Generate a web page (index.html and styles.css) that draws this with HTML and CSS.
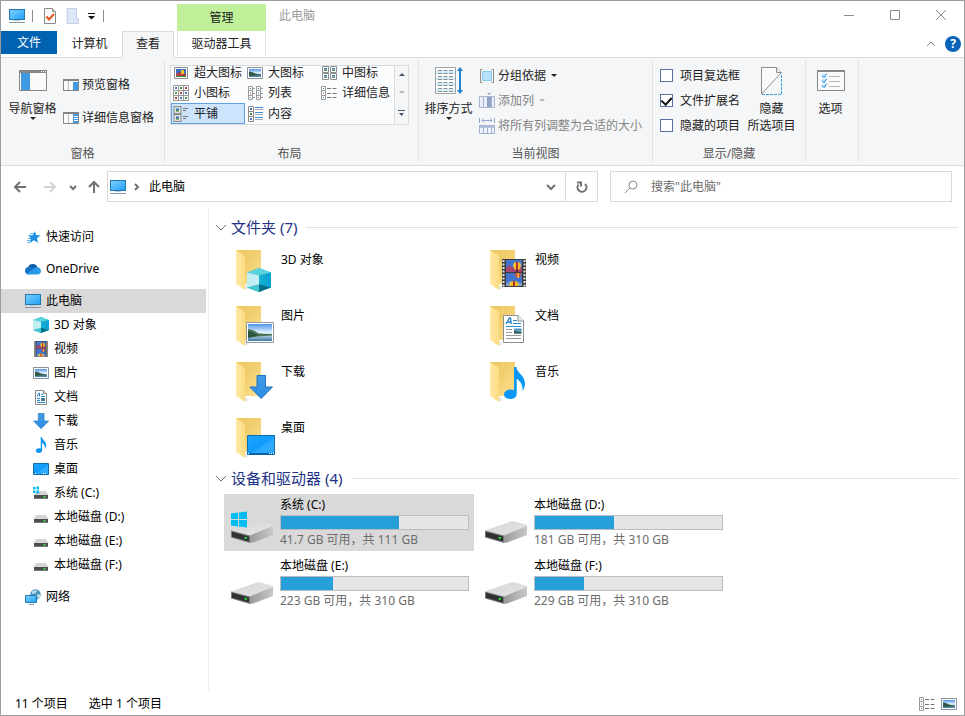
FILE: index.html
```html
<!DOCTYPE html>
<html lang="zh-CN">
<head>
    <meta charset="UTF-8">
    <meta name="viewport" content="width=device-width, initial-scale=1.0">
    <title>此电脑</title>
    <link rel="stylesheet" href="styles.css">
</head>
<body>
    <!-- Shared icons -->
    <svg class="sprite" width="0" height="0">
        <defs>
            <linearGradient id="gScreen" x1="0" y1="0" x2="1" y2="1"><stop offset="0" stop-color="#7fd0ff"/><stop offset=".5" stop-color="#4fb9fc"/><stop offset="1" stop-color="#1d9cf5"/></linearGradient>
            <linearGradient id="gDesk" x1="0" y1="0" x2="1" y2="1"><stop offset="0" stop-color="#1ea5ff"/><stop offset=".5" stop-color="#0f9bfb"/><stop offset=".6" stop-color="#2faaff"/><stop offset="1" stop-color="#2faaff"/></linearGradient>
            <linearGradient id="gFolder" x1="0" y1="0" x2="1" y2="0"><stop offset="0" stop-color="#ffe9a6"/><stop offset="1" stop-color="#fbdc80"/></linearGradient>
            <linearGradient id="gFolderBack" x1="0" y1="0" x2="1" y2="1"><stop offset="0" stop-color="#eec965"/><stop offset=".4" stop-color="#f0cd6c"/><stop offset="1" stop-color="#ffe394"/></linearGradient>
            <linearGradient id="gCubeL" x1="0" y1="0" x2="1" y2="0"><stop offset="0" stop-color="#bdeef0"/><stop offset="1" stop-color="#c9eef5"/></linearGradient>
            <linearGradient id="gCubeR" x1="0" y1="0" x2="1" y2="0"><stop offset="0" stop-color="#14b3cf"/><stop offset="1" stop-color="#0d9fdb"/></linearGradient>
            <linearGradient id="gSky" x1="0" y1="0" x2="0" y2="1"><stop offset="0" stop-color="#4e92ea"/><stop offset=".5" stop-color="#e3f2fd"/><stop offset=".7" stop-color="#a9cbdd"/><stop offset="1" stop-color="#3b76a6"/></linearGradient>
            <linearGradient id="gDriveTop" x1="0" y1="0" x2="1" y2="1"><stop offset="0" stop-color="#d4d5d7"/><stop offset="1" stop-color="#e6e6e8"/></linearGradient>
            <linearGradient id="gDriveSide" x1="0" y1="0" x2="1" y2="0"><stop offset="0" stop-color="#98999b"/><stop offset="1" stop-color="#c7c8ca"/></linearGradient>
            <linearGradient id="gDown" x1="0" y1="0" x2="0" y2="1"><stop offset="0" stop-color="#3f9ce9"/><stop offset="1" stop-color="#2d8be2"/></linearGradient>
        </defs>
        <symbol id="pc" viewBox="0 0 16 16">
            <rect x=".5" y="1.5" width="15" height="10" fill="url(#gScreen)" stroke="#2677ac" stroke-width="1"/>
            <path d="M5 12h6v1H5z" fill="#b9c9d3" stroke="none"/><path d="M0 14h16v1H0z" fill="#8798ab" stroke="none"/>
        </symbol>
        <symbol id="cube" viewBox="0 0 16 16">
            <path d="M0 3 8 0l8 3v10l-8 3-8-3z" fill="#36bfd0"/><path d="M0 3 8 0l8 3-8 2z" fill="#58d2dc"/>
            <path d="M0 3l8 2v7.500L0 13z" fill="url(#gCubeL)"/><path d="M16 3 8 5v7.500l8 .5z" fill="url(#gCubeR)"/>
            <path d="M0 13l8-2.200V16z" fill="#43c6d2"/><path d="M16 13l-8-2.200V16z" fill="#04708c"/>
        </symbol>
        <symbol id="film" viewBox="0 0 24 28">
            <path d="M0 0h24v28H0z" fill="#3a3a3a"/>
            <path d="M1.500 1v27M22.500 1v27" stroke="#e4e4e4" stroke-width="2" stroke-dasharray="2 1.500"/>
            <path d="M4 1h16v12H4zM4 14h16v13H4z" fill="#3f74cf"/>
            <path d="M4 9l3-3 3 2 4 2 6-2v5H4z" fill="#a8456e"/><path d="M4 24l5-2 11 2v3H4z" fill="#7d9bd4"/>
            <path d="M15 3c6 0 4 6 1.500 8h-3C11 9 9 3 15 3z" fill="#f3c02a"/><path d="M14 3h2v8h-2z" fill="#b82f2c"/><path d="M14 11h2v1.500h-2z" fill="#222"/>
            <path d="M13 14h6c.500 3-2 5-3 5s-3.500-2-3-5z" fill="#dd4a3a"/><path d="M15.500 14h1.500v5h-1.500z" fill="#f3c02a"/>
            <path d="M12 22c4 0 5 2.500 4.500 5h-9C7 24.500 8 22 12 22z" fill="#f2bd2b"/><path d="M11 22h2v5h-2z" fill="#b82f2c"/>
        </symbol>
        <symbol id="photo" viewBox="0 0 28 21">
            <path d="M.5.500h27v20H.5z" fill="#fff" stroke="#8f9aa6"/>
            <path d="M2 2h24v17H2z" fill="url(#gSky)"/>
            <path d="M2 7c4 .5 7 2 10 4.200 4 .5 9 1 14 .8v1.500L2 15z" fill="#4d7254"/><path d="M2 9c4 .5 6 3 11 4.500L2 16z" fill="#2f573f"/>
        </symbol>
        <symbol id="photo-s" viewBox="0 0 16 16">
            <path d="M.5 2.500h15v11H.5z" fill="#fff" stroke="#8a949e"/>
            <path d="M2 4h12v8H2z" fill="url(#gSky)"/><path d="M2 6.500c3 0 5 2 8 2.500l4 .5v1L2 11z" fill="#33594a"/>
        </symbol>
        <symbol id="doc" viewBox="0 0 21 28">
            <path d="M.5.500h14.500l5.500 5.500v21.500H.5z" fill="#fff" stroke="#8b8f93"/><path d="M15 .5V6h5.500" fill="#eee" stroke="#8b8f93"/>
            <path d="M3 9 6.500 3h1l.8 6M4.500 7H8" fill="none" stroke="#2a80c4" stroke-width="1.300"/>
            <path d="M10 5.500h4M10 8.500h8M3 11.500h15" stroke="#2a8ad0"/><path d="M3 14.500h6M3 17.500h6M3 20.500h15M3 23.500h15" stroke="#9a9a9a"/>
            <path d="M11 13.500h7.500v5H11z" fill="#5794b8"/><path d="M11 16l7.500 1.500v1H11z" fill="#2e5848"/>
        </symbol>
        <symbol id="doc-s" viewBox="0 0 16 16">
            <path d="M2.500 1.500h8l3 3v11h-11z" fill="#fff" stroke="#85898d"/><path d="M10.500 1.500v3h3" fill="#eee" stroke="#85898d"/>
            <path d="M4 7.500 6 4h.5v3.500" fill="none" stroke="#2a80c4"/><path d="M8 5.500h2M8 7.500h4" stroke="#2a8ad0"/>
            <path d="M4 9.500h3M4 11.500h3M4 13.500h8" stroke="#2a8ad0"/><path d="M8 9h4v3H8z" fill="#47788d"/>
        </symbol>
        <symbol id="down" viewBox="0 0 24 24">
            <path d="M8 .500h8.500V12H23.500L12.200 23.500.800 12H8z" fill="url(#gDown)" stroke="#2375bd"/>
        </symbol>
        <symbol id="note" viewBox="0 0 21 32">
            <path d="M10 0h2.300c.6 6 8.700 8.200 8.700 17 0 2.500-1 4.800-2.600 7 .5-6.200-1.600-9.500-5.700-12.300V27c0 3-3 5-6.700 5-3.500 0-6-1.700-6-4.400 0-3 3-5.200 6.700-5.200 1.300 0 2.400.2 3.300.6z" fill="#0b98f5"/>
        </symbol>
        <symbol id="desk" viewBox="0 0 28 20">
            <path d="M.5.500h27v19H.5z" fill="url(#gDesk)" stroke="#0e6cb0"/><path d="M1 18h26v1.500H1z" fill="#0b62a3"/>
            <path d="M1 18h1v1H1zM22 18h1v1h-1zM24 18h1v1h-1zM26 18h1v1h-1z" fill="#fff"/>
        </symbol>
        <symbol id="desk-s" viewBox="0 0 16 16">
            <path d="M.5 2.500h15v11H.5z" fill="url(#gDesk)" stroke="#0e6cb0"/><path d="M2 12h1v1H2zM10 12h1v1h-1zM12 12h1v1h-1z" fill="#fff"/>
        </symbol>
        <symbol id="winlogo" viewBox="0 0 16 16">
            <path d="M0 2l7-1v6.500H0zM8 .900 16 0v7.500H8zM0 8.500h7V15l-7-1zM8 8.500h8V16l-8-1z" fill="#00bcf2"/>
        </symbol>
        <symbol id="drive-s" viewBox="0 0 16 16">
            <path d="M3 6h10l2 4H1z" fill="#d3d5d8"/><path d="M1 10h14v4H1z" fill="#4b4d4f"/><path d="M1 13h14v1H1z" fill="#77797b"/><path d="M10.500 11h2v1.500h-2z" fill="#39f03a"/>
        </symbol>
        <symbol id="sysdrive-s" viewBox="0 0 16 16">
            <path d="M4 6h9l2 4H1z" fill="#d3d5d8"/><path d="M1 10h14v4H1z" fill="#4b4d4f"/><path d="M1 13h14v1H1z" fill="#77797b"/><path d="M10.500 11h2v1.500h-2z" fill="#39f03a"/>
            <path d="M0 2h2.500v2.500H0zM3.500 1.500H6v3H3.500zM0 5.500h2.500V8H0zM3.500 5.500H6v3H3.500z" fill="#00bcf2"/>
        </symbol>
        <symbol id="drive" viewBox="0 0 42 22">
            <path d="M0 9.500 26 .5h4L42 4v2L19 15z" fill="url(#gDriveTop)"/>
            <path d="M19 14.500 42 5v9L22 21.500l-3 .5z" fill="url(#gDriveSide)"/>
            <path d="M0 9.500l19 5V22L0 16.500z" fill="#77797b"/><path d="M1 10.800l17 4.700v5L1 15.800z" fill="#2e3032"/>
            <path d="M13.500 16h2.500v1.800h-2.500z" fill="#2be02e"/>
        </symbol>
        <symbol id="folder" viewBox="0 0 48 48">
            <path d="M5 4h25v34H12z" fill="url(#gFolderBack)"/><path d="M5 4l9 6v34l-9-6z" fill="url(#gFolder)"/>
            <path d="M14 38v5.500l4-1.500z" fill="#e9e9e9"/>
        </symbol>
        <symbol id="star" viewBox="0 0 16 16">
            <path d="M10 2l1 4 4.500.5-3.500 2.700L13 14 9 11.200l-4.600 3L6 9.500 3.500 6.500 8 6z" fill="#1e8fe0"/>
            <path d="M5 4.500h4M3 6.500h4M3 9.500h3M2 11.500h3M2.500 13.500h2" stroke="#58b0ee" fill="none"/>
        </symbol>
        <symbol id="cloud" viewBox="0 0 16 16">
            <path d="M3 6.500a5 5 0 0 1 9.500 0L8 10z" fill="#0c5cab"/>
            <path d="M3.500 6C1.500 6 0 7.600 0 9.700c0 2.100 1.600 3.800 3.600 3.800l7-4.500C9 7 6 5.700 3.500 6z" fill="#1370c4"/>
            <path d="M12.300 6.300c-2 0-4 1-5.300 2.700L1.500 12.800c.6.500 1.300.7 2.100.7h9C14.500 13.500 16 12 16 10s-1.500-3.700-3.700-3.700z" fill="#2a9be8"/>
        </symbol>
        <symbol id="network" viewBox="0 0 16 16">
            <circle cx="10.500" cy="5.500" r="5.200" fill="#4c93ba"/><path d="M7 2.500c2-2 4-1.500 5.500-.5L10 4.500 7 5zM11 6l4.500-1c.3 2-.5 4-2 5z" fill="#b6dcea"/>
            <path d="M.5 6.500h11v7H.5z" fill="url(#gScreen)" stroke="#2677ac"/><path d="M4 15.500h5" stroke="#8798ab"/>
        </symbol>
        <symbol id="thumb" viewBox="0 0 7 7">
            <path d="M.5.500h6v6h-6z" fill="#fff" stroke="#8c8c8c"/><path d="M2 2h3v1.500H2z" fill="#4580c0"/><path d="M2 3.500h3V5H2z" fill="#5b9058"/>
        </symbol>
        <symbol id="details" viewBox="0 0 16 16">
            <path d="M.5 1.500h4v13h-4zM.5 5.500h4M.5 10.500h4" fill="#fff" stroke="#999"/>
            <path d="M2 3h1v1H2zM2 12h1v1H2z" fill="#3d79bd"/><path d="M2 7.500h1v1H2z" fill="#c04040"/>
            <path d="M6 3.500h4M11.500 3.500h4M6 8.500h4M11.500 8.500h4M6 12.500h4M11.500 12.500h4" stroke="#777"/>
        </symbol>
    </svg>

    <div class="window">
        <!-- Title bar -->
        <header class="titlebar">
            <div class="quick">
                <svg class="i16"><use href="#pc"/></svg>
                <span class="bar"></span>
                <button aria-label="属性"><svg class="i16" viewBox="0 0 16 16"><path d="M2.500.500h8l3 3v12h-11z" fill="#fafafa" stroke="#8a8a8a"/><path d="M10.500.500v3h3" fill="#ddd" stroke="#8a8a8a"/><path d="M4.500 8.500l2.500 3 5-5.500" fill="none" stroke="#e0531d" stroke-width="2"/></svg></button>
                <button aria-label="新建文件夹"><svg class="i16" viewBox="0 0 16 16"><path d="M2 .5h9.500v10h2v5H2z" fill="#dbe7f7" stroke="#c3d0e6"/></svg></button>
                <button aria-label="自定义快速访问工具栏"><svg class="i8" viewBox="0 0 8 8"><path d="M0 1h7v1H0zM0 4h7L3.500 7.500z" fill="#111"/></svg></button>
                <span class="bar"></span>
            </div>
            <div class="context">管理</div>
            <h1>此电脑</h1>
            <div class="controls">
                <button aria-label="最小化"><svg viewBox="0 0 12 12"><path d="M1 5.500h10"/></svg></button>
                <button aria-label="最大化"><svg viewBox="0 0 12 12"><path d="M1.500.500h9v9h-9z"/></svg></button>
                <button aria-label="关闭"><svg viewBox="0 0 12 12"><path d="M1 0l10 10M11 0 1 10"/></svg></button>
            </div>
        </header>

        <!-- Ribbon tabs -->
        <div class="tabs">
            <button class="tab file">文件</button>
            <button class="tab">计算机</button>
            <button class="tab active">查看</button>
            <button class="tab tools">驱动器工具</button>
            <div class="tabs-end">
                <button aria-label="折叠功能区"><svg class="i8" viewBox="0 0 8 8"><path d="M0 6l4-4 4 4" fill="none" stroke="#8a8a8a"/></svg></button>
                <button class="help" aria-label="帮助">?</button>
            </div>
        </div>

        <!-- Ribbon -->
        <div class="ribbon">
            <section class="group g-panes">
                <div class="row">
                    <button class="big">
                        <svg viewBox="0 0 28 28"><path d="M.5 3.500h27v20H.5z" fill="#fafafa" stroke="#858585"/><path d="M0 3h28v3H0z" fill="#858585"/><path d="M22 4.500h1M24 4.500h1M26 4.500h1" stroke="#fff"/><path d="M2 6h9v17H2z" fill="#3f99e3"/><path d="M11 6h1v17h-1z" fill="#fff"/></svg>
                        <span>导航窗格</span><i class="caret"></i>
                    </button>
                    <div class="panes">
                        <button class="small"><svg class="i16" viewBox="0 0 16 16"><path d="M.5 2.500h15v11H.5z" fill="#fafafa" stroke="#858585"/><path d="M0 2h16v2H0z" fill="#858585"/><path d="M5.500 4v9" stroke="#bbb"/><path d="M10 5h5v8h-5z" fill="#3f99e3"/></svg>预览窗格</button>
                        <button class="small"><svg class="i16" viewBox="0 0 16 16"><path d="M.5 2.500h15v11H.5z" fill="#fafafa" stroke="#858585"/><path d="M0 2h16v2H0z" fill="#858585"/><path d="M5.500 4v9" stroke="#bbb"/><path d="M10 4h5v9h-5z" fill="#3f99e3"/><path d="M11 6.500h4M11 8.500h4M11 10.500h4" stroke="#fff"/></svg>详细信息窗格</button>
                    </div>
                </div>
                <h2>窗格</h2>
            </section>

            <section class="group g-layout">
                <div class="gallery">
                    <div class="choices">
                        <button class="small"><svg class="i16" viewBox="0 0 16 16"><path d="M1.500 2.500h13v11h-13z" fill="#fff" stroke="#8c8c8c"/><path d="M3 4h10v8H3z" fill="#3b6fc4"/><path d="M3 9l4-2 6 2v3H3z" fill="#b8403c"/><path d="M8 5h3v4H8z" fill="#ecc32e"/><path d="M3 11h10v1H3z" fill="#3b8a45"/></svg>超大图标</button>
                        <button class="small"><svg class="i16"><use href="#photo-s"/></svg>大图标</button>
                        <button class="small"><svg class="i16"><use href="#thumb" x="1" y="1" width="7" height="7"/><use href="#thumb" x="9" y="1" width="7" height="7"/><use href="#thumb" x="1" y="8" width="7" height="7"/><use href="#thumb" x="9" y="8" width="7" height="7"/></svg>中图标</button>
                        <button class="small"><svg class="i16" viewBox="0 0 16 16"><path d="M.5.500h15v15H.5zM5.500.500v15M10.500.500v15M.5 5.500h15M.5 10.500h15" fill="#fff" stroke="#999"/><path d="M2 3h2M12 8h2M7 13h2" stroke="#3d79bd" stroke-width="2"/><path d="M7 3h2M2 8h2M12 13h2" stroke="#4f9150" stroke-width="2"/><path d="M12 3h2M7 8h2M2 13h2" stroke="#c04040" stroke-width="2"/></svg>小图标</button>
                        <button class="small"><svg class="i16" viewBox="0 0 16 16"><path d="M1.500 1.500h4v13h-4zM1.500 5.500h4M1.500 10.500h4M9.500 1.500h4v13h-4zM9.500 5.500h4M9.500 10.500h4" fill="#fff" stroke="#999"/><path d="M3 3.500h1M11 3.500h1M3 12.500h1M11 8h1" stroke="#3d79bd"/><path d="M3 8h1M11 12.500h1" stroke="#c04040"/><path d="M6 3.500h2M6 8.500h2M6 12.500h2M14 3.500h2M14 8.500h2M14 12.500h2" stroke="#999"/></svg>列表</button>
                        <button class="small"><svg class="i16"><use href="#details"/></svg>详细信息</button>
                        <button class="small selected"><svg class="i16" viewBox="0 0 16 16"><use href="#thumb" width="9" height="8"/><use href="#thumb" y="8" width="9" height="8"/><path d="M10 2.500h5M10 4.500h3M10 10.500h5M10 12.500h3" stroke="#777"/></svg>平铺</button>
                        <button class="small"><svg class="i16" viewBox="0 0 16 16"><path d="M1.500.500h5v15h-5zM1.500 5.500h5M1.500 10.500h5" fill="#fff" stroke="#8c8c8c"/><path d="M3 3h2M3 13h2" stroke="#3d79bd" stroke-width="2"/><path d="M3 8h2" stroke="#4f9150" stroke-width="2"/><path d="M8 1.500h8M8 6.500h8M8 11.500h8" stroke="#3b8dd4"/><path d="M8 3.500h8M8 8.500h8M8 13.500h8" stroke="#aaa"/></svg>内容</button>
                    </div>
                    <div class="scroll">
                        <button aria-label="向上"><i class="caret up"></i></button>
                        <button aria-label="向下"><i class="caret off"></i></button>
                        <button aria-label="更多"><svg class="i8" viewBox="0 0 8 8"><path d="M0 1h7v1H0zM1 4h5L3.500 7z" fill="#44546a"/></svg></button>
                    </div>
                </div>
                <h2>布局</h2>
            </section>

            <section class="group g-view">
                <div class="row">
                    <button class="big">
                        <svg viewBox="0 0 28 28"><path d="M.5.500h20v26H.5z" fill="#fff" stroke="#a0a0a0"/><path d="M1 4h19v3H1zM1 10h19v3H1zM1 16h19v3H1zM1 22h19v3H1z" fill="#d3ecfa"/><path d="M3 3.500h15M3 6.500h15M3 9.500h15M3 12.500h15M3 15.500h15M3 18.500h15M3 21.500h15M3 24.500h15" stroke="#8d8d8d" stroke-dasharray="4 1.500"/><path d="M25 3v21" stroke="#2483cc" stroke-width="2"/><path d="M22 4l3-4 3 4zM22 23l3 4 3-4z" fill="#2483cc"/></svg>
                        <span>排序方式</span><i class="caret"></i>
                    </button>
                    <div class="list">
                        <button class="small"><svg class="i16" viewBox="0 0 16 16"><path d="M3.500 1.500h-2v13h2M12.500 1.500h2v13h-2" fill="none" stroke="#8c8c8c"/><path d="M3.500 3.500h9v9h-9z" fill="#b7e2ff" stroke="#8ac8ee"/></svg>分组依据<i class="caret"></i></button>
                        <button class="small" disabled><svg class="i16" viewBox="0 0 16 16"><path d="M.5 3.500h15v11H.5zM4.500 3v11M12.500 3v11" fill="#e9eef8" stroke="#a6b4d0"/><path d="M8 4h4v10H8z" fill="#8fa2c8"/><path d="M8 0h4l-2 2z" fill="#8fa2c8"/></svg>添加列<i class="caret"></i></button>
                        <button class="small" disabled><svg class="i16" viewBox="0 0 16 16"><path d="M.5 0v5M15.500 0v5M3 2.500h10M5 .5l-2 2 2 2M11 .5l2 2-2 2" fill="none" stroke="#92a5ca"/><path d="M.5 7.500h15v8H.5zM4.500 10v5M8.500 10v5M12.500 10v5" fill="#eef2fa" stroke="#a0b0d0"/><path d="M1 8h14v2H1z" fill="#b4c1dd"/></svg>将所有列调整为合适的大小</button>
                    </div>
                </div>
                <h2>当前视图</h2>
            </section>

            <section class="group g-show">
                <div class="row">
                    <div class="list">
                        <label><input type="checkbox">项目复选框</label>
                        <label><input type="checkbox" checked>文件扩展名</label>
                        <label><input type="checkbox">隐藏的项目</label>
                    </div>
                    <button class="big">
                        <svg viewBox="0 0 28 28"><path d="M3.500.500h15l5 5L3.500 27z" fill="#fafafa" stroke="#8c8c8c"/><path d="M18.500.500v5h5" fill="#eee" stroke="#8c8c8c"/><path d="M23.500 8v19.500H4" fill="none" stroke="#3b9be0" stroke-dasharray="3 1"/></svg>
                        <span>隐藏<br>所选项目</span>
                    </button>
                </div>
                <h2>显示/隐藏</h2>
            </section>

            <section class="group g-options">
                <button class="big">
                    <svg viewBox="0 0 28 28"><path d="M.5 3.500h27v20H.5z" fill="#fafafa" stroke="#858585"/><path d="M0 3h28v2H0z" fill="#858585"/><path d="M5 7h4v4H5zM5 12h4v4H5zM5 17h4v4H5z" fill="#c9e5fa"/><path d="M5 8.500l2 2L10 6.500M5 13.500l2 2 3-4M5 18.500l2 2 3-4" fill="none" stroke="#2a8ad8"/><path d="M12 9.500h11M12 14.500h11M12 19.500h11" stroke="#b5b5b5"/></svg>
                    <span>选项</span>
                </button>
            </section>
        </div>

        <!-- Address and search -->
        <div class="navbar">
            <button class="back" aria-label="后退"><svg class="i14" viewBox="0 0 14 14"><path d="M13 7H2M7 2 2 7l5 5"/></svg></button>
            <button class="forward" aria-label="前进" disabled><svg class="i14" viewBox="0 0 14 14"><path d="M1 7h11M7 2l5 5-5 5"/></svg></button>
            <button class="recent" aria-label="最近浏览的位置"><svg class="i8" viewBox="0 0 8 8"><path d="M1 3l3 3 3-3"/></svg></button>
            <button class="parent" aria-label="上移"><svg class="i14" viewBox="0 0 14 14"><path d="M7 13V2M2 7l5-5 5 5"/></svg></button>
            <div class="address">
                <svg class="i16"><use href="#pc"/></svg>
                <svg class="i8" viewBox="0 0 8 8"><path d="M2 1l3 3-3 3"/></svg>
                <button class="crumb">此电脑</button>
                <button class="drop" aria-label="以前的位置"><svg class="i10" viewBox="0 0 10 10"><path d="M1 3l4 4 4-4"/></svg></button>
                <button class="refresh" aria-label="刷新"><svg class="i14" viewBox="0 0 14 14"><path d="M3.500 4.500a4.500 4.500 0 1 0 6.500-.6M2 2.500h4v4"/></svg></button>
            </div>
            <label class="search">
                <svg class="i14" viewBox="0 0 14 14"><circle cx="9" cy="5" r="4"/><path d="M6 8l-5 5"/></svg>
                <input type="search" placeholder='搜索"此电脑"' aria-label="搜索">
            </label>
        </div>

        <div class="body">
            <!-- Navigation pane -->
            <nav class="tree">
                <a href="#"><svg class="i16"><use href="#star"/></svg>快速访问</a>
                <a href="#"><svg class="i16"><use href="#cloud"/></svg>OneDrive</a>
                <div class="branch">
                    <a href="#" class="current"><svg class="i16"><use href="#pc"/></svg>此电脑</a>
                    <a href="#" class="child"><svg class="i16"><use href="#cube"/></svg>3D 对象</a>
                    <a href="#" class="child"><svg class="i16"><use href="#film"/></svg>视频</a>
                    <a href="#" class="child"><svg class="i16"><use href="#photo-s"/></svg>图片</a>
                    <a href="#" class="child"><svg class="i16"><use href="#doc-s"/></svg>文档</a>
                    <a href="#" class="child"><svg class="i16"><use href="#down"/></svg>下载</a>
                    <a href="#" class="child"><svg class="i16"><use href="#note"/></svg>音乐</a>
                    <a href="#" class="child"><svg class="i16"><use href="#desk-s"/></svg>桌面</a>
                    <a href="#" class="child"><svg class="i16"><use href="#sysdrive-s"/></svg>系统 (C:)</a>
                    <a href="#" class="child"><svg class="i16"><use href="#drive-s"/></svg>本地磁盘 (D:)</a>
                    <a href="#" class="child"><svg class="i16"><use href="#drive-s"/></svg>本地磁盘 (E:)</a>
                    <a href="#" class="child"><svg class="i16"><use href="#drive-s"/></svg>本地磁盘 (F:)</a>
                </div>
                <a href="#"><svg class="i16"><use href="#network"/></svg>网络</a>
            </nav>

            <!-- Content -->
            <main class="content">
                <h2><svg class="i10" viewBox="0 0 10 10"><path d="M0 3l5 5 5-5"/></svg>文件夹 (7)</h2>
                <div class="tiles folders">
                    <a href="#" class="tile"><svg class="i48"><use href="#folder"/><use href="#cube" x="16" y="22" width="24" height="24"/></svg>3D 对象</a>
                    <a href="#" class="tile"><svg class="i48"><use href="#folder"/><use href="#film" x="17" y="13" width="24" height="28"/></svg>视频</a>
                    <a href="#" class="tile"><svg class="i48"><use href="#folder"/><use href="#photo" x="15" y="20" width="28" height="21"/></svg>图片</a>
                    <a href="#" class="tile"><svg class="i48"><use href="#folder"/><use href="#doc" x="18" y="13" width="21" height="28"/></svg>文档</a>
                    <a href="#" class="tile"><svg class="i48"><use href="#folder"/><use href="#down" x="18" y="17" width="24" height="24"/></svg>下载</a>
                    <a href="#" class="tile"><svg class="i48"><use href="#folder"/><use href="#note" x="19" y="9" width="21" height="32"/></svg>音乐</a>
                    <a href="#" class="tile"><svg class="i48"><use href="#folder"/><use href="#desk" x="16" y="21" width="28" height="20"/></svg>桌面</a>
                </div>

                <h2><svg class="i10" viewBox="0 0 10 10"><path d="M0 3l5 5 5-5"/></svg>设备和驱动器 (4)</h2>
                <div class="tiles drives">
                    <a href="#" class="tile selected">
                        <svg class="i48"><use href="#drive" y="26" width="42" height="22"/><use href="#winlogo" y="16" width="16" height="17"/></svg>
                        <div class="info">系统 (C:)<div class="meter"><div style="width: 63%"></div></div><span>41.7 GB 可用，共 111 GB</span></div>
                    </a>
                    <a href="#" class="tile">
                        <svg class="i48"><use href="#drive" y="26" width="42" height="22"/></svg>
                        <div class="info">本地磁盘 (D:)<div class="meter"><div style="width: 42%"></div></div><span>181 GB 可用，共 310 GB</span></div>
                    </a>
                    <a href="#" class="tile">
                        <svg class="i48"><use href="#drive" y="26" width="42" height="22"/></svg>
                        <div class="info">本地磁盘 (E:)<div class="meter"><div style="width: 28%"></div></div><span>223 GB 可用，共 310 GB</span></div>
                    </a>
                    <a href="#" class="tile">
                        <svg class="i48"><use href="#drive" y="26" width="42" height="22"/></svg>
                        <div class="info">本地磁盘 (F:)<div class="meter"><div style="width: 26%"></div></div><span>229 GB 可用，共 310 GB</span></div>
                    </a>
                </div>
            </main>
        </div>

        <!-- Status bar -->
        <footer class="status">
            <span>11 个项目</span>
            <span>选中 1 个项目</span>
            <div class="modes">
                <button aria-label="详细信息"><svg class="i16"><use href="#details"/></svg></button>
                <button aria-label="大图标"><svg class="i16"><use href="#photo-s"/></svg></button>
            </div>
        </footer>
    </div>
</body>
</html>
```
FILE: styles.css
```css
* {
    box-sizing: border-box;
}

body {
    margin: 0;
    font-family: "Noto Sans", "Noto Sans CJK SC", sans-serif;
    font-size: 12px;
    line-height: 16px;
    color: #000;
    background: #fff;
}

h1, h2 {
    margin: 0;
    font-size: 12px;
    font-weight: normal;
}

button {
    padding: 0;
    border: 0;
    background: none;
    font: inherit;
    color: inherit;
    white-space: nowrap;
}

a {
    color: inherit;
    text-decoration: none;
}

svg {
    display: block;
    flex: none;
}

.sprite {
    position: absolute;
}

.i8 { width: 8px; height: 8px; }
.i10 { width: 10px; height: 10px; }
.i14 { width: 14px; height: 14px; }
.i16 { width: 16px; height: 16px; }
.i48 { width: 48px; height: 48px; }

.window {
    display: flex;
    flex-direction: column;
    min-height: 100vh;
    border: 1px solid #9c9c9c;
}

/* Title bar */
.titlebar {
    display: flex;
    height: 30px;
}

.quick {
    display: flex;
    align-items: center;
    gap: 7px;
    width: 176px;
    padding-left: 8px;
}

.quick .bar {
    width: 1px;
    height: 12px;
    margin-right: 2px;
    background: #8c8c8c;
}

.context {
    width: 89px;
    margin-top: 3px;
    line-height: 27px;
    text-align: center;
    color: #222;
    background: #c1f09b;
}

.titlebar h1 {
    flex: 1;
    padding-left: 13px;
    line-height: 30px;
    color: #999;
}

.controls {
    display: flex;
}

.controls button {
    display: grid;
    place-items: center;
    width: 46px;
}

.controls svg {
    width: 12px;
    height: 12px;
    fill: none;
    stroke: #8a8a8a;
}

/* Tabs */
.tabs {
    display: flex;
    height: 27px;
    border-bottom: 1px solid #dadbdc;
}

.tab {
    height: 25px;
    width: 65px;
    color: #222;
}

.tab.file {
    width: 56px;
    height: 23px;
    color: #fff;
    background: #0063b1;
}

.tab.active {
    height: 27px;
    width: 52px;
    padding-bottom: 2px;
    border: 1px solid #dadbdc;
    border-bottom: 0;
    background: #f5f6f7;
}

.tab.tools {
    width: 89px;
    margin-left: 3px;
    border: 1px solid #e4e4e4;
    border-width: 0 1px;
}

.tabs-end {
    display: flex;
    align-items: center;
    gap: 10px;
    margin-left: auto;
    padding-right: 3px;
}

.help {
    width: 16px;
    height: 16px;
    border-radius: 50%;
    font-weight: bold;
    color: #fff;
    background: #0b64b8;
}

/* Ribbon */
.ribbon {
    display: flex;
    height: 108px;
    border-bottom: 1px solid #dadbdc;
    color: #222;
    background: #f5f6f7;
}

.group {
    display: flex;
    flex-direction: column;
    flex: none;
    margin: 2px 0 3px;
    border-right: 1px solid #e2e3e4;
}

.group h2 {
    margin-top: auto;
    text-align: center;
    color: #555;
}

.g-panes { width: 164px; }
.g-layout { width: 254px; padding: 5px 9px 0 5px; }
.g-view { width: 234px; }
.g-show { width: 153px; }
.g-options { width: 53px; }

.row {
    display: flex;
    padding-left: 6px;
}

.g-view .row {
    padding-left: 4px;
}

.big {
    display: flex;
    flex-direction: column;
    align-items: center;
    width: 51px;
    padding-top: 7px;
    line-height: 17px;
}

.big svg {
    width: 28px;
    height: 28px;
    margin-bottom: 5px;
}

.small {
    display: flex;
    align-items: center;
    gap: 3px;
    text-align: left;
}

.small:disabled {
    color: #838383;
}

.panes {
    display: grid;
    gap: 17px;
    padding: 17px 0 0 5px;
}

.list {
    display: grid;
    grid-auto-rows: 25px;
    padding: 3px 0 0 5px;
}

.list label {
    display: flex;
    align-items: center;
    gap: 7px;
    width: 86px;
    white-space: nowrap;
}

.g-show .list {
    padding-left: 1px;
}

.list input {
    display: grid;
    place-items: center;
    flex: none;
    appearance: none;
    width: 13px;
    height: 13px;
    margin: 0;
    border: 1px solid #56729f;
    background: #fff;
}

.list input:checked::before {
    content: "";
    width: 5px;
    height: 8px;
    margin-bottom: 3px;
    border: solid #111;
    border-width: 0 2px 2px 0;
    transform: rotate(42deg);
}

.g-options .big {
    width: 49px;
}

.caret {
    flex: none;
    width: 0;
    margin-left: 2px;
    border: 3px solid transparent;
    border-top-color: #222;
    border-bottom: 0;
}

.big .caret {
    margin-left: 0;
}

.small:disabled .caret,
.caret.off {
    border-top-color: #b8b8b8;
}

.scroll .caret {
    margin: 0;
}

.caret.up {
    border-top: 0;
    border-bottom: 3px solid #44546a;
}

/* Layout gallery: the first row is scrolled slightly under the top edge */
.gallery {
    display: flex;
    height: 60px;
    border: 1px solid #dadbdc;
    background: #fbfcfd;
}

.choices {
    display: grid;
    grid-template-columns: repeat(3, 74px);
    grid-template-rows: 16px 21px 21px;
    flex: 1;
}

.choices .small {
    gap: 5px;
    padding-left: 2px;
}

.choices .small:nth-child(-n+3) {
    height: 13px;
    line-height: 13px;
}

.choices .selected {
    gap: 5px;
    padding-left: 1px;
    border: 1px solid #62a2e4;
    background: #cce4fc;
}

.scroll {
    display: grid;
    width: 14px;
    border-left: 1px solid #dadbdc;
    background: #f5f6f7;
}

.scroll button {
    display: grid;
    place-items: center;
}

/* Address and search */
.navbar {
    display: flex;
    align-items: center;
    height: 41px;
    padding: 0 12px;
}

.navbar svg {
    fill: none;
    stroke: #707070;
    stroke-width: 2;
}

.back { margin-right: 16px; }
.forward { margin-right: 12px; }
.recent { margin-right: 10px; }
.parent { margin-right: 6px; }

.forward:disabled {
    opacity: .3;
}

.address {
    display: flex;
    align-items: center;
    flex: 1;
    height: 31px;
    padding-left: 2px;
    border: 1px solid #d9d9d9;
}

.address .i16 {
    margin-right: 7px;
}

.crumb {
    margin-left: 8px;
}

.drop {
    margin: 0 9px 0 auto;
}

.refresh {
    display: grid;
    place-items: center;
    width: 32px;
    height: 29px;
    border-left: 1px solid #d9d9d9;
}

.search {
    display: flex;
    align-items: center;
    gap: 13px;
    flex: 0 1 342px;
    height: 31px;
    margin-left: 12px;
    padding-left: 13px;
    border: 1px solid #d9d9d9;
}

.search svg {
    stroke: #8c8c8c;
    stroke-width: 1;
}

.search input {
    flex: 1;
    min-width: 0;
    padding: 0;
    border: 0;
    outline: 0;
    font: inherit;
    background: none;
}

.search input::placeholder {
    color: #6d6d6d;
}

/* Navigation pane */
.body {
    display: flex;
    flex: 1;
}

.tree {
    display: flex;
    flex-direction: column;
    gap: 8px;
    width: 208px;
    padding: 18px 2px 0 0;
    border-right: 1px solid #f0f0f0;
}

.tree a {
    display: flex;
    align-items: center;
    gap: 5px;
    height: 24px;
    padding-left: 24px;
}

.tree .child {
    padding-left: 32px;
}

.tree .current {
    background: #d9d9d9;
}

/* Content */
.content {
    flex: 1;
    padding: 6px 6px 0 7px;
}

.content h2 {
    display: flex;
    align-items: center;
    gap: 5px;
    height: 30px;
    padding-bottom: 2px;
    font-size: 15px;
    color: #1e3287;
}

.content h2 svg {
    fill: none;
    stroke: #707070;
}

.content h2::after {
    content: "";
    flex: 1;
    height: 1px;
    margin-left: 4px;
    background: #e2e2e2;
}

.tiles {
    display: grid;
    grid-template-columns: repeat(auto-fill, 250px);
    gap: 4px;
    padding-left: 8px;
}

.tile {
    display: flex;
    gap: 2px;
    padding-left: 7px;
    line-height: 20px;
}

.folders .tile {
    height: 52px;
    padding-top: 7px;
}

.folders {
    padding-bottom: 1px;
}

.folders .i48 {
    margin-top: -4px;
}

.drives .tile {
    gap: 1px;
    height: 57px;
    padding-top: 1px;
}

.tile.selected {
    background: #d9d9d9;
}

.info {
    width: 189px;
}

.info span {
    display: block;
    color: #6d6d6d;
}

.meter {
    height: 15px;
    border: 1px solid #bcbcbc;
    background: #e6e6e6;
}

.meter div {
    height: 100%;
    background: #26a0da;
}

/* Status bar */
.status {
    display: flex;
    align-items: center;
    gap: 21px;
    height: 23px;
    padding: 0 7px 0 14px;
}

.modes {
    display: flex;
    gap: 6px;
    margin-left: auto;
}
```
